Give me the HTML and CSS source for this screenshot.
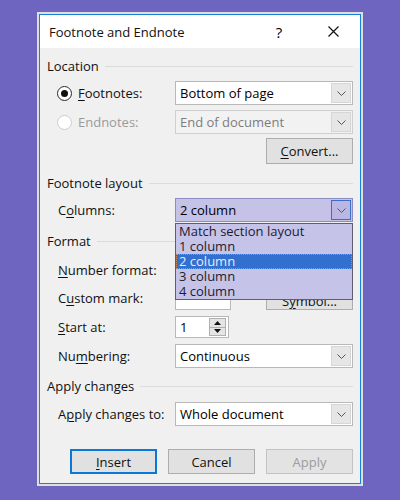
FILE: index.html
```html
<!DOCTYPE html>
<html>
<head>
<meta charset="utf-8">
<link rel="stylesheet" href="styles.css">
</head>
<body>
<div class="dialog">
  <div class="titlebar">
    <span class="title">Footnote and Endnote</span>
    <span class="help">?</span>
    <span class="close"><svg width="11" height="11" viewBox="0 0 11 11"><path d="M0.5 0.5 L10.5 10.5 M10.5 0.5 L0.5 10.5" stroke="#111" stroke-width="1.2" fill="none"/></svg></span>
  </div>
  <div class="content">
    <div class="group g-location"><span>Location</span><div class="rule"></div></div>

    <div class="row r-foot">
      <div class="lbl radio-lbl"><span class="radio checked"></span><span><u>F</u>ootnotes:</span></div>
      <div class="select"><span class="val">Bottom of page</span><span class="dd"><svg width="9" height="5" viewBox="0 0 9 5"><path d="M0.5 0.5 L4.5 4.5 L8.5 0.5" stroke="#555" fill="none"/></svg></span></div>
    </div>

    <div class="row r-end">
      <div class="lbl radio-lbl disabled"><span class="radio"></span><span>Endnotes:</span></div>
      <div class="select disabled"><span class="val">End of document</span><span class="dd"><svg width="9" height="5" viewBox="0 0 9 5"><path d="M0.5 0.5 L4.5 4.5 L8.5 0.5" stroke="#555" fill="none"/></svg></span></div>
    </div>

    <div class="row r-convert">
      <div></div>
      <div class="right"><span class="push"><u>C</u>onvert...</span></div>
    </div>

    <div class="group g-layout"><span>Footnote layout</span><div class="rule"></div></div>

    <div class="row r-cols">
      <div class="lbl">C<u>o</u>lumns:</div>
      <div class="select-wrap">
        <div class="select open"><span class="val">2 column</span><span class="dd"><svg width="9" height="5" viewBox="0 0 9 5"><path d="M0.5 0.5 L4.5 4.5 L8.5 0.5" stroke="#555" fill="none"/></svg></span></div>
        <ul class="list">
          <li>Match section layout</li>
          <li>1 column</li>
          <li class="sel">2 column</li>
          <li>3 column</li>
          <li>4 column</li>
        </ul>
      </div>
    </div>

    <div class="group g-format"><span>Format</span><div class="rule"></div></div>

    <div class="row r-num">
      <div class="lbl"><u>N</u>umber format:</div>
      <div class="select"><span class="val"></span><span class="dd"></span></div>
    </div>

    <div class="row r-mark">
      <div class="lbl">C<u>u</u>stom mark:</div>
      <div class="split"><span class="input"></span><span class="push sym">S<u>y</u>mbol...</span></div>
    </div>

    <div class="row r-start">
      <div class="lbl"><u>S</u>tart at:</div>
      <div>
        <div class="spin"><span class="v">1</span>
          <span class="arrows">
            <span><svg width="7" height="4" viewBox="0 0 7 4"><path d="M0 4 L3.5 0 L7 4 Z" fill="#111"/></svg></span>
            <span><svg width="7" height="4" viewBox="0 0 7 4"><path d="M0 0 L3.5 4 L7 0 Z" fill="#111"/></svg></span>
          </span>
        </div>
      </div>
    </div>

    <div class="row r-numbering">
      <div class="lbl">Nu<u>m</u>bering:</div>
      <div class="select"><span class="val">Continuous</span><span class="dd"><svg width="9" height="5" viewBox="0 0 9 5"><path d="M0.5 0.5 L4.5 4.5 L8.5 0.5" stroke="#555" fill="none"/></svg></span></div>
    </div>

    <div class="group g-apply"><span>Apply changes</span><div class="rule"></div></div>

    <div class="row r-applyto">
      <div class="lbl">A<u>p</u>ply changes to:</div>
      <div class="select"><span class="val">Whole document</span><span class="dd"><svg width="9" height="5" viewBox="0 0 9 5"><path d="M0.5 0.5 L4.5 4.5 L8.5 0.5" stroke="#555" fill="none"/></svg></span></div>
    </div>

    <div class="footer">
      <span class="push default"><u>I</u>nsert</span>
      <span class="push">Cancel</span>
      <span class="push off">Apply</span>
    </div>
  </div>
</div>
</body>
</html>
```
FILE: styles.css
```css
* { box-sizing: border-box; }
html, body { margin: 0; }
body {
  width: 400px;
  height: 500px;
  overflow: hidden;
  background: #6e65c1;
  padding: 14px 0 0 39px;
  font-family: "Open Sans", "Noto Sans", sans-serif;
  font-size: 13px;
  color: #000;
}
u { text-decoration: underline; text-underline-offset: 2px; text-decoration-thickness: 1px; }

.dialog {
  width: 322px;
  height: 470px;
  border: 1px solid #1a7fd5;
  box-shadow: 0 0 0 2px #dedede;
  background: #f0f0f0;
  display: flex;
  flex-direction: column;
}
.titlebar {
  height: 33px;
  background: #fff;
  display: flex;
  align-items: center;
  padding-left: 9px;
  flex: none;
}
.title { flex: 1; font-size: 13px; color: #111; }
.help { width: 20px; text-align: center; font-size: 15px; margin-right: 21px; }
.close { width: 46px; height: 33px; display: flex; align-items: center; justify-content: center; margin-right: 4px; }

.content { padding: 9px 7px 0 7px; }

.group { display: flex; align-items: center; height: 18px; color: #111; }
.group .rule { flex: 1; height: 1px; background: #dcdcdc; margin-left: 6px; }

.row { display: grid; grid-template-columns: 128px 1fr; align-items: center; height: 24px; }
.lbl { padding-left: 11px; white-space: nowrap; color: #111; }
.radio-lbl { padding-left: 10px; display: flex; align-items: center; gap: 6px; }
.radio-lbl.disabled { color: #9a9a9a; }
.radio {
  width: 15px; height: 15px; border-radius: 50%;
  border: 1px solid #2a2a2a; background: #fff;
  display: inline-flex; align-items: center; justify-content: center;
}
.radio.checked::after { content: ""; width: 7px; height: 7px; border-radius: 50%; background: #111; }
.radio-lbl.disabled .radio { border-color: #cdcdcd; }

.select { display: flex; height: 24px; border: 1px solid #b8b8b8; background: #fff; }
.select .val { flex: 1; padding-left: 4px; line-height: 22px; white-space: nowrap; overflow: hidden; }
.select .dd {
  width: 20px; margin: 1px; background: #e6e6e6; border: 1px solid #d6d6d6;
  display: flex; align-items: center; justify-content: center;
}
.select.disabled { border-color: #cfcfcf; background: #f2f2f2; color: #7d7d7d; }
.select.open { background: #c5c2e8; border-color: #8d8bbf; }
.select.open .dd { background: #bab8e3; border-color: #3a6ec8; }

.select-wrap { position: relative; }
.list {
  position: absolute; left: 0; right: 0; top: 25px;
  margin: 0; padding: 0; list-style: none;
  border: 1px solid #5e5e6c; background: #c6c3e9; z-index: 2;
}
.list li { height: 15px; line-height: 15px; padding-left: 3px; color: #1d1b30; white-space: nowrap; }
.list li.sel { background: #3170cf; color: #e9e8ff; outline: 1px dotted #c88a5a; outline-offset: -1px; }

.push {
  width: 87px; height: 25px; border: 1px solid #adadad; background: #e1e1e1;
  display: flex; align-items: center; justify-content: center; color: #111;
}
.push.sym { height: 24px; padding-top: 6px; }
.right { display: flex; justify-content: flex-end; }
.split { display: flex; justify-content: space-between; align-items: center; }
.input { width: 56px; height: 24px; border: 1px solid #b8b8b8; background: #fff; }

.spin { width: 54px; height: 22px; border: 1px solid #b8b8b8; background: #fff; display: flex; padding: 1px; }
.spin .v { flex: 1; padding-left: 3px; line-height: 18px; }
.arrows { width: 17px; display: flex; flex-direction: column; margin-right: 1px; }
.arrows span { flex: 1; border: 1px solid #b0b0b0; background: #e5e5e5; display: flex; align-items: center; justify-content: center; }
.arrows span + span { border-top: none; }

.g-location { margin-top: 0; }
.r-foot { margin-top: 6px; }
.r-end { margin-top: 5px; }
.r-convert { margin-top: 4px; height: 26px; }
.r-convert .push { height: 26px; }
.g-layout { margin-top: 10px; }
.r-cols { margin-top: 6px; }
.g-format { margin-top: 10px; }
.r-num { margin-top: 8px; }
.r-mark { margin-top: 4px; }
.r-start { margin-top: 6px; height: 22px; }
.r-numbering { margin-top: 6px; }
.g-apply { margin-top: 9px; }
.r-applyto { margin-top: 7px; }

.footer { display: flex; justify-content: flex-end; gap: 11px; margin-top: 23px; }
.push.default { border: 2px solid #0a78d7; }
.push.off { color: #9c9c9c; border-color: #c3c3c3; background: #e3e3e3; }
```
